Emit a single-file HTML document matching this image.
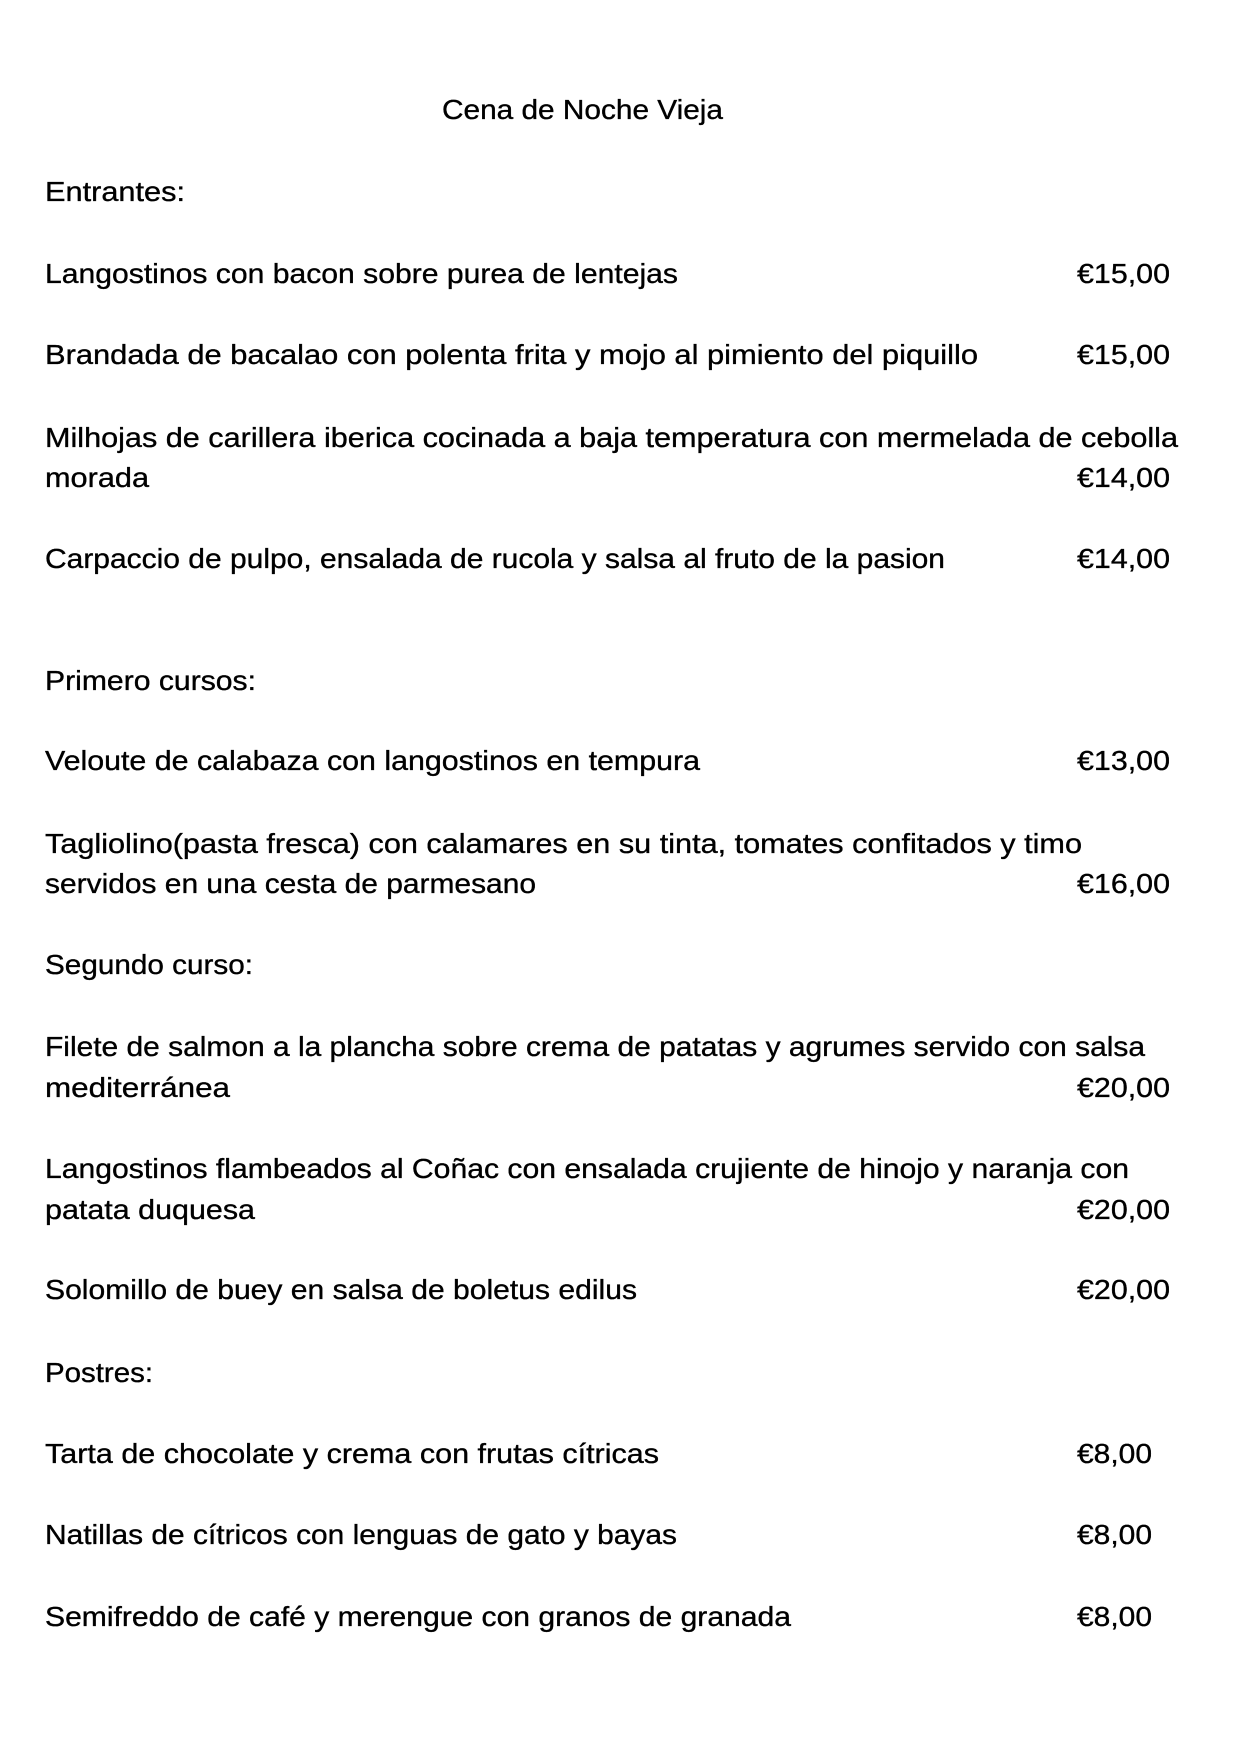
<!DOCTYPE html>
<html><head><meta charset="utf-8"><style>
html,body{margin:0;padding:0;background:#fff;}
svg{display:block;}
text{font-family:"Liberation Sans",sans-serif;font-size:28px;fill:#000;stroke:#000;stroke-width:0.35px;}
</style></head><body>
<svg width="1240" height="1753" viewBox="0 0 1240 1753" xmlns="http://www.w3.org/2000/svg">
<text x="442" y="119" textLength="281" lengthAdjust="spacingAndGlyphs">Cena de Noche Vieja</text>
<text x="45" y="201" textLength="140" lengthAdjust="spacingAndGlyphs">Entrantes:</text>

<text x="45" y="283" textLength="633" lengthAdjust="spacingAndGlyphs">Langostinos con bacon sobre purea de lentejas</text>
<text x="1077" y="283" textLength="93" lengthAdjust="spacingAndGlyphs">€15,00</text>

<text x="45" y="364" textLength="933" lengthAdjust="spacingAndGlyphs">Brandada de bacalao con polenta frita y mojo al pimiento del piquillo</text>
<text x="1077" y="364" textLength="93" lengthAdjust="spacingAndGlyphs">€15,00</text>

<text x="45" y="447" textLength="1133" lengthAdjust="spacingAndGlyphs">Milhojas de carillera iberica cocinada a baja temperatura con mermelada de cebolla</text>
<text x="45" y="487" textLength="104" lengthAdjust="spacingAndGlyphs">morada</text>
<text x="1077" y="487" textLength="93" lengthAdjust="spacingAndGlyphs">€14,00</text>

<text x="45" y="568" textLength="900" lengthAdjust="spacingAndGlyphs">Carpaccio de pulpo, ensalada de rucola y salsa al fruto de la pasion</text>
<text x="1077" y="568" textLength="93" lengthAdjust="spacingAndGlyphs">€14,00</text>

<text x="45" y="690" textLength="211" lengthAdjust="spacingAndGlyphs">Primero cursos:</text>

<text x="45" y="770" textLength="655" lengthAdjust="spacingAndGlyphs">Veloute de calabaza con langostinos en tempura</text>
<text x="1077" y="770" textLength="93" lengthAdjust="spacingAndGlyphs">€13,00</text>

<text x="45" y="853" textLength="1037" lengthAdjust="spacingAndGlyphs">Tagliolino(pasta fresca) con calamares en su tinta, tomates confitados y timo</text>
<text x="45" y="893" textLength="491" lengthAdjust="spacingAndGlyphs">servidos en una cesta de parmesano</text>
<text x="1077" y="893" textLength="93" lengthAdjust="spacingAndGlyphs">€16,00</text>

<text x="45" y="974" textLength="208" lengthAdjust="spacingAndGlyphs">Segundo curso:</text>

<text x="45" y="1056" textLength="1100" lengthAdjust="spacingAndGlyphs">Filete de salmon a la plancha sobre crema de patatas y agrumes servido con salsa</text>
<text x="45" y="1097" textLength="185" lengthAdjust="spacingAndGlyphs">mediterránea</text>
<text x="1077" y="1097" textLength="93" lengthAdjust="spacingAndGlyphs">€20,00</text>

<text x="45" y="1178" textLength="1084" lengthAdjust="spacingAndGlyphs">Langostinos flambeados al Coñac con ensalada crujiente de hinojo y naranja con</text>
<text x="45" y="1219" textLength="210" lengthAdjust="spacingAndGlyphs">patata duquesa</text>
<text x="1077" y="1219" textLength="93" lengthAdjust="spacingAndGlyphs">€20,00</text>

<text x="45" y="1299" textLength="592" lengthAdjust="spacingAndGlyphs">Solomillo de buey en salsa de boletus edilus</text>
<text x="1077" y="1299" textLength="93" lengthAdjust="spacingAndGlyphs">€20,00</text>

<text x="45" y="1382" textLength="108" lengthAdjust="spacingAndGlyphs">Postres:</text>

<text x="45" y="1463" textLength="614" lengthAdjust="spacingAndGlyphs">Tarta de chocolate y crema con frutas cítricas</text>
<text x="1077" y="1463" textLength="75" lengthAdjust="spacingAndGlyphs">€8,00</text>

<text x="45" y="1544" textLength="632" lengthAdjust="spacingAndGlyphs">Natillas de cítricos con lenguas de gato y bayas</text>
<text x="1077" y="1544" textLength="75" lengthAdjust="spacingAndGlyphs">€8,00</text>

<text x="45" y="1626" textLength="746" lengthAdjust="spacingAndGlyphs">Semifreddo de café y merengue con granos de granada</text>
<text x="1077" y="1626" textLength="75" lengthAdjust="spacingAndGlyphs">€8,00</text>
</svg>
</body></html>
